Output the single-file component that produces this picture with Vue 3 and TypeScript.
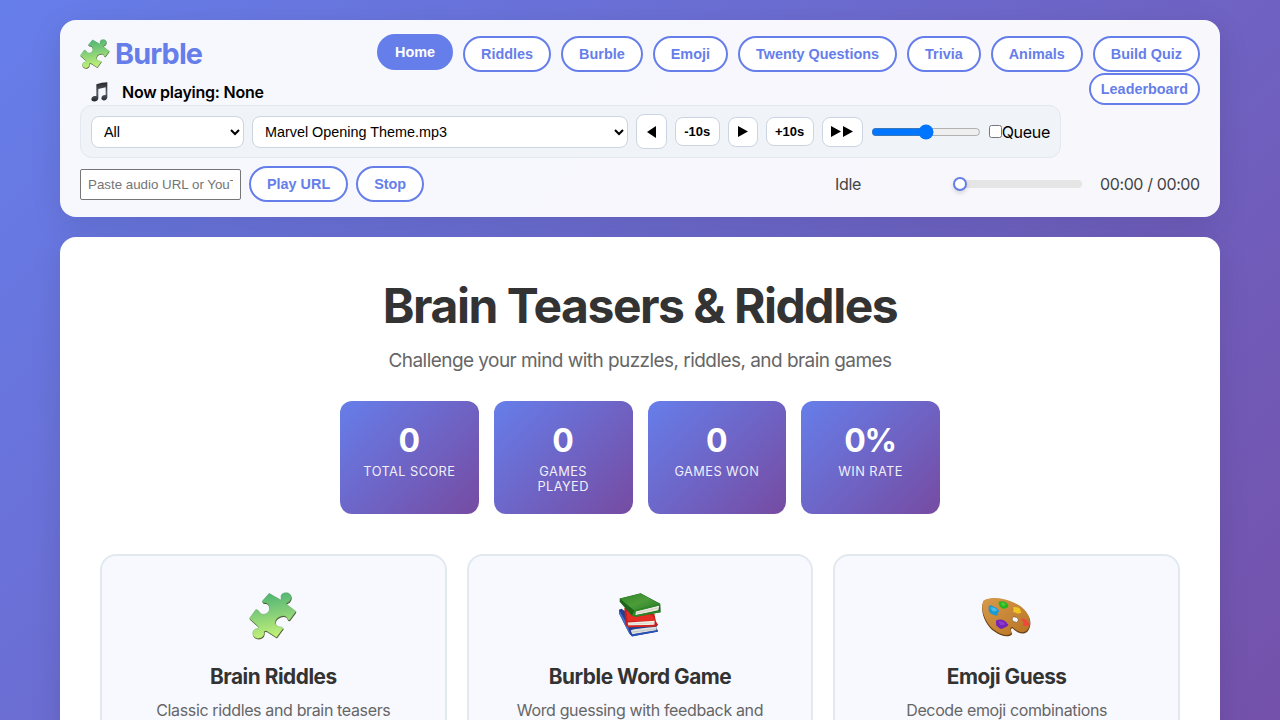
<script setup lang="ts">
interface Stat { value: string; label: string }
interface Card { icon: string; title: string; text: string }

const navItems: string[] = ['Home', 'Riddles', 'Burble', 'Emoji', 'Twenty Questions', 'Trivia', 'Animals', 'Build Quiz']
const stats: Stat[] = [
  { value: '0', label: 'Total Score' },
  { value: '0', label: 'Games Played' },
  { value: '0', label: 'Games Won' },
  { value: '0%', label: 'Win Rate' },
]
const cards: Card[] = [
  { icon: 'puzzle', title: 'Brain Riddles', text: 'Classic riddles and brain teasers' },
  { icon: 'books', title: 'Burble Word Game', text: 'Word guessing with feedback and hints' },
  { icon: 'palette', title: 'Emoji Guess', text: 'Decode emoji combinations' },
]
</script>

<template>
  <div class="page">
    <svg class="defs" width="0" height="0" aria-hidden="true">
      <defs>
        <linearGradient id="green" x1="0" y1="0" x2="0.15" y2="1">
          <stop offset="0" stop-color="#45b173" />
          <stop offset="0.5" stop-color="#84ce78" />
          <stop offset="1" stop-color="#c0f078" />
        </linearGradient>
        <linearGradient id="ink" x1="0" y1="0" x2="0" y2="1">
          <stop offset="0" stop-color="#2b2629" />
          <stop offset="0.55" stop-color="#59616d" />
          <stop offset="1" stop-color="#20242a" />
        </linearGradient>
        <linearGradient id="wood" x1="0" y1="0" x2="1" y2="1">
          <stop offset="0" stop-color="#d79a4c" />
          <stop offset="1" stop-color="#b87322" />
        </linearGradient>
        <linearGradient id="cover" x1="0" y1="0" x2="1" y2="1">
          <stop offset="0" stop-color="#2f8426" />
          <stop offset="0.5" stop-color="#4c9d3a" />
          <stop offset="1" stop-color="#277a22" />
        </linearGradient>
        <symbol id="puzzle" viewBox="86 64 148 148">
          <path fill="#4d4a2b" transform="translate(1.2 3)" d="M87 146L107 118Q114 117 119 127C126 137 146 133 149 118C150 103 142 97 133 98Q126 97 127 92L148 68L178 85Q187 91 185 83C182 72 190 66 200 66C212 66 219 76 215 87Q212 95 204 97Q198 100 207 106L231 124L211 151Q204 152 204 145C200 134 180 136 170 149C164 159 169 169 178 171Q188 170 192 176L171 204L141 185Q132 182 133 190C133 203 122 209 111 207C99 204 94 193 100 183Q105 176 114 177Q117 174 114 170Z" />
          <path fill="url(#green)" stroke="#4e8d55" stroke-width="1" d="M87 146L107 118Q114 117 119 127C126 137 146 133 149 118C150 103 142 97 133 98Q126 97 127 92L148 68L178 85Q187 91 185 83C182 72 190 66 200 66C212 66 219 76 215 87Q212 95 204 97Q198 100 207 106L231 124L211 151Q204 152 204 145C200 134 180 136 170 149C164 159 169 169 178 171Q188 170 192 176L171 204L141 185Q132 182 133 190C133 203 122 209 111 207C99 204 94 193 100 183Q105 176 114 177Q117 174 114 170Z" />
        </symbol>
        <symbol id="books" viewBox="84 64 132 140">
          <path fill="#233f91" d="M87 120L94 117L106 124L204 163L199 172L203 182V186L126 199L118 192L87 131Z" />
          <path fill="#4771cc" d="M88 121L112 165L121 194L112 180L88 132Z" />
          <path fill="#dfe2df" d="M122 182Q130 177 200 171L199 181L127 193Z" />
          <path fill="none" stroke="#9ba6ae" stroke-width="1.3" d="M125 187L199 177" />
          <path fill="#2851bb" d="M120 191L126 194L204 181V185L126 200Z" />
          <path fill="#c51f19" d="M103 114L193 132L198 155L202 162V168L115 172L106 165Z" />
          <path fill="#e52f24" d="M109 123L188 136L195 153L113 154Z" />
          <path fill="#f0efe6" d="M113 158L194 153L193 165L115 168Z" />
          <path fill="none" stroke="#bbb9af" stroke-width="1.3" d="M114 163L193 159" />
          <path fill="#d42520" d="M113 167L201 166L195 171L113 172Z" />
          <path fill="#1b651a" d="M89 86L152 70L211 102L212 127L138 141L125 137L89 96Z" />
          <path fill="url(#cover)" d="M90 87L152 71L210 103L133 122Z" />
          <path fill="#eeeae2" d="M137 124L208 107L205 121L136 136Z" />
          <path fill="none" stroke="#aaa99e" stroke-width="1.2" d="M139 130L206 114" />
          <path fill="#2d8926" d="M133 121L210 102V106L137 125L135 136L211 122V127L138 141L126 137Z" />
        </symbol>
        <symbol id="palette" viewBox="66 80 152 122">
          <path fill="#684014" d="M73 93C95 77 135 86 165 99C195 112 216 139 213 161C211 184 196 194 177 186Q165 180 160 173C151 174 157 185 159 190C152 202 125 198 106 183C80 165 61 123 73 93Z" />
          <path fill="url(#wood)" d="M73 91C95 76 135 84 165 97C195 110 214 137 212 158C209 180 196 190 178 182Q166 177 160 169C148 171 155 181 158 186C151 198 126 194 107 179C82 162 62 119 73 91Z" />
          <ellipse cx="168" cy="147" rx="10" ry="7.5" transform="rotate(28 168 147)" fill="#f8f9ff" stroke="#7d5426" stroke-width="2" />
          <path fill="#1a9ad4" d="M89 107Q94 102 103 108Q119 114 120 122Q114 126 116 134Q107 137 97 130Q88 126 89 117Z" />
          <path fill="#4bb8e8" d="M94 111Q106 108 115 119Q109 126 101 122Z" />
          <path fill="#25b51f" d="M119 94Q128 90 139 95Q149 103 147 110Q137 118 127 113Q117 106 119 94Z" />
          <path fill="#4fc93a" d="M125 97Q135 95 140 102Q136 109 129 106Z" />
          <path fill="#efc524" d="M161 111Q174 107 182 115L186 127Q177 132 168 126Q157 124 164 119Z" />
          <path fill="#f0463b" d="M184 143Q195 144 203 150L211 163L201 167L190 163L193 156Z" />
          <path fill="#7422b7" d="M111 150Q127 143 140 154L148 163Q142 170 136 171Q127 178 120 172L111 164Z" />
          <path fill="#8a3acb" d="M118 152Q130 150 139 160Q131 167 123 163Z" />
        </symbol>
      </defs>
    </svg>

    <header class="header">
      <div class="top">
        <div class="left">
          <div class="brand"><svg class="brand-icon"><use href="#puzzle" /></svg><span>Burble</span></div>
          <div class="now">
            <svg class="note" viewBox="96 186 51 60">
              <path fill="url(#ink)" d="M112 193Q128 187 145 187V230C146 243 128 245 127 235C127 227 134 224 140 225V202L118 207V235C116 248 97 247 97 238C97 230 105 226 112 229Z" />
            </svg>
            <span>Now playing: None</span>
          </div>
        </div>
        <nav class="nav">
          <div class="nav-row">
            <button v-for="(item, i) in navItems" :key="item" class="pill" :class="{ active: i === 0 }">{{ item }}</button>
          </div>
          <button class="pill small">Leaderboard</button>
        </nav>
      </div>

      <div class="player">
        <select class="select category"><option>All</option></select>
        <select class="select track"><option>Marvel Opening Theme.mp3</option></select>
        <button class="ctl prev"><svg width="9" height="12" viewBox="0 0 9 12"><path d="M9 0V12L0 6Z" /></svg></button>
        <button class="ctl back">-10s</button>
        <button class="ctl play"><svg width="10" height="11" viewBox="0 0 10 11"><path d="M0 0V11L10 5.5Z" /></svg></button>
        <button class="ctl ahead">+10s</button>
        <button class="ctl next"><svg width="22" height="11" viewBox="0 0 22 11"><path d="M0 0V11L10 5.5ZM12 0V11L22 5.5Z" /></svg></button>
        <input class="volume" type="range" min="0" max="100" value="50">
        <label class="queue"><input type="checkbox">Queue</label>
      </div>

      <div class="source">
        <input class="url" type="text" placeholder="Paste audio URL or YouTube link">
        <button class="pill">Play URL</button>
        <button class="pill">Stop</button>
        <span class="status">Idle</span>
        <div class="seek"><span class="thumb"></span></div>
        <span class="time">00:00 / 00:00</span>
      </div>
    </header>

    <main class="main">
      <h1>Brain Teasers &amp; Riddles</h1>
      <p class="lead">Challenge your mind with puzzles, riddles, and brain games</p>
      <section class="stats">
        <div v-for="s in stats" :key="s.label" class="stat">
          <div class="value">{{ s.value }}</div>
          <div class="label">{{ s.label }}</div>
        </div>
      </section>
      <section class="cards">
        <article v-for="c in cards" :key="c.title" class="card">
          <div class="icon-box"><svg :class="c.icon"><use :href="'#' + c.icon" /></svg></div>
          <h3>{{ c.title }}</h3>
          <p>{{ c.text }}</p>
        </article>
      </section>
    </main>
  </div>
</template>

<style>
body { margin: 0; overflow: hidden; }
</style>

<style scoped>
* { box-sizing: border-box; }
.page {
  height: 720px;
  overflow: hidden;
  padding: 20px 60px 0;
  background: linear-gradient(135deg, #667eea 0%, #764ba2 100%) 0 0 / 100% 1000px no-repeat;
  font-family: Inter, "Liberation Sans", sans-serif;
  color: #333;
}
.defs { position: absolute; }
button { font-family: "Liberation Sans", Arial, sans-serif; margin: 0; }
.header {
  height: 197px;
  padding: 16px 20px 15px;
  border-radius: 16px;
  background: rgba(255, 255, 255, 0.95);
  box-shadow: 0 8px 32px rgba(0, 0, 0, 0.1);
}
.top { display: flex; justify-content: space-between; height: 69px; }
.brand { display: flex; align-items: center; gap: 5px; height: 36px; font-size: 28.8px; line-height: 34px; font-weight: 700; color: #667eea; letter-spacing: -0.85px; }
.brand-icon { width: 30px; height: 30px; }
.now { display: flex; align-items: center; height: 20px; margin-top: 10px; padding-left: 12px; color: #000; font-size: 16px; font-weight: 600; letter-spacing: -0.25px; }
.note { width: 17px; height: 20px; margin: 0 14px 0 -1px; }
.nav { display: flex; flex-direction: column; align-items: flex-end; }
.nav-row { display: flex; gap: 10px; }
.nav-row .pill { letter-spacing: 0.01px; }
.pill {
  height: 36px;
  padding: 0 16px;
  border: 2px solid #667eea;
  border-radius: 25px;
  background: #fff;
  color: #667eea;
  font-size: 14.4px;
  font-weight: 700;
  white-space: nowrap;
}
.nav-row .active { background: #667eea; color: #fff; transform: translateY(-2px); }
.small { height: 32px; margin-top: 1px; padding: 0 10px; }
.player {
  display: flex;
  align-items: center;
  gap: 8px;
  width: 981px;
  height: 53px;
  padding: 0 10px;
  border: 1px solid #e2e8f0;
  border-radius: 12px;
  background: #f0f4f9;
  color: #000;
}
.select {
  height: 32px;
  padding: 0 8px;
  border: 1px solid #cbd5e1;
  border-radius: 8px;
  background: #fff;
  color: #000;
  font: 14.4px "Liberation Sans", Arial, sans-serif;
}
.category { width: 153px; }
.track { width: 376px; }
.ctl {
  display: flex;
  align-items: center;
  justify-content: center;
  flex: none;
  height: 29px;
  padding: 0;
  border: 1px solid #cbd5e1;
  border-radius: 8px;
  background: #fff;
  color: #000;
  font-size: 13px;
  font-weight: 700;
}
.prev { width: 31px; height: 35px; }
.back { width: 45px; }
.play { width: 30px; height: 30px; }
.ahead { width: 48px; }
.next { width: 41px; height: 30px; }
.volume { width: 110px; height: 16px; margin: 0; flex: none; }
.queue { display: flex; align-items: center; font-size: 16px; letter-spacing: -0.3px; }
.queue input { width: 13px; height: 13px; margin: 0; }
.source { display: flex; align-items: center; height: 36px; margin-top: 8px; }
.url { width: 161px; height: 31px; margin-right: 8px; padding: 1px 7px; border: 1px solid #767676; border-radius: 2px; background: #fff; font: 13.33px "Liberation Sans", Arial, sans-serif; }
.source .pill { margin-right: 8px; }
.status { margin-left: auto; width: 118px; font-size: 16px; letter-spacing: -0.3px; color: #444; }
.seek { display: flex; align-items: center; width: 129px; height: 8px; border-radius: 4px; background: #e5e5e5; }
.thumb { width: 14px; height: 14px; border: 2px solid #667eea; border-radius: 50%; background: #fff; box-shadow: 0 2px 4px rgba(0, 0, 0, 0.15); }
.time { width: 100px; margin-left: 18px; font-size: 16px; letter-spacing: -0.38px; color: #444; white-space: nowrap; }
.main {
  height: 600px;
  margin-top: 20px;
  padding: 40px;
  border-radius: 16px;
  background: #fff;
  box-shadow: 0 8px 32px rgba(0, 0, 0, 0.1);
  text-align: center;
}
h1 { margin: 0; font-size: 48px; line-height: 58px; font-weight: 700; letter-spacing: -1.48px; }
.lead { margin: 14px 0 0; font-size: 19px; line-height: 24px; letter-spacing: -0.55px; color: #666; }
.stats { display: grid; grid-template-columns: repeat(4, 1fr); gap: 15px; width: 600px; height: 113px; margin: 28px auto 0; }
.stat { padding: 20px; border-radius: 12px; background: linear-gradient(135deg, #667eea, #764ba2); color: #fff; }
.value { font-size: 32px; line-height: 40px; font-weight: 750; letter-spacing: -1.3px; text-indent: -1.3px; }
.label { margin-top: 3px; font-size: 12.8px; line-height: 15px; letter-spacing: 0.42px; text-transform: uppercase; opacity: 0.9; }
.cards { display: grid; grid-template-columns: repeat(3, 1fr); gap: 20px; margin-top: 40px; }
.card { height: 240px; padding: 30px 35px; border: 2px solid #e2e8f0; border-radius: 16px; background: #f8f9ff; }
.icon-box { display: flex; align-items: center; justify-content: center; height: 60px; }
.puzzle { width: 48px; height: 48px; margin-right: 1px; }
.books { width: 44px; height: 47px; margin-top: -3px; }
.palette { width: 51px; height: 41px; margin: 2px 0 0 0; }
h3 { margin: 18px 0 0; font-size: 20.8px; line-height: 26px; font-weight: 700; letter-spacing: -0.46px; }
.card p { margin: 8px 0 0; font-size: 16px; line-height: 24px; letter-spacing: -0.36px; color: #666; }
</style>
